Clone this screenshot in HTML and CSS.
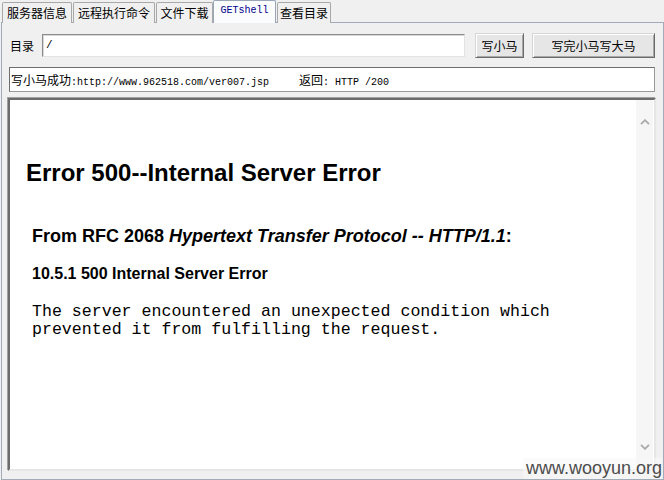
FILE: index.html
```html
<!DOCTYPE html>
<html>
<head>
<meta charset="utf-8">
<link rel="stylesheet" href="styles.css">
</head>
<body>
<div class="tabs">
  <div class="tab t1">服务器信息</div>
  <div class="tab t2">远程执行命令</div>
  <div class="tab t3">文件下载</div>
  <div class="tab active">GETshell</div>
  <div class="tab t5">查看目录</div>
</div>
<div class="panel">
  <div class="row">
    <span class="lbl">目录</span>
    <div class="input">/</div>
    <div class="btn small">写小马</div>
    <div class="btn big">写完小马写大马</div>
  </div>
  <div class="status"><span class="cjk">写小马成功</span>:http://www.962518.com/ver007.jsp     <span class="cjk">返回</span>: HTTP /200</div>
  <div class="view">
    <div class="doc">
      <h1 class="h-main">Error 500--Internal Server Error</h1>
      <h2 class="h-sub">From RFC 2068 <i>Hypertext Transfer Protocol -- HTTP/1.1</i>:</h2>
      <h3 class="h-sec">10.5.1 500 Internal Server Error</h3>
      <pre class="msg">The server encountered an unexpected condition which
prevented it from fulfilling the request.</pre>
    </div>
    <div class="scrollbar">
      <svg class="chev" width="10" height="6" viewBox="0 0 10 6"><polyline points="1,5.2 5,1.2 9,5.2" fill="none" stroke="#a9a9a9" stroke-width="1.8"/></svg>
      <svg class="chev" width="10" height="6" viewBox="0 0 10 6"><polyline points="1,0.8 5,4.8 9,0.8" fill="none" stroke="#a9a9a9" stroke-width="1.8"/></svg>
    </div>
  </div>
</div>
<div class="watermark">www.wooyun.org</div>
</body>
</html>
```
FILE: styles.css
```css
* { box-sizing: border-box; }
html, body {
  margin: 0;
  padding: 0;
  width: 664px;
  height: 480px;
  overflow: hidden;
  background: #f0f0f0;
}
body {
  position: relative;
  font-family: "Noto Sans CJK SC", "Liberation Sans", sans-serif;
  font-size: 12px;
  color: #000;
}
.tabs {
  display: flex;
  align-items: flex-end;
  height: 23px;
  padding-left: 2px;
}
.tab {
  height: 21px;
  border: 1px solid #a8a8a8;
  border-bottom: none;
  border-radius: 2px 2px 0 0;
  background: #f0f0f0;
  display: flex;
  align-items: center;
  justify-content: center;
  font-size: 12px;
  line-height: 12px;
  margin-right: 1px;
  padding-bottom: 1px;
}
.t1 { width: 70px; }
.t2 { width: 82px; }
.t3 { width: 57px; margin-right: 0; }
.t5 { width: 54px; }
.tab.active {
  width: 63px;
  height: 23px;
  background: #fbfcfe;
  border-color: #98a6b8;
  color: #00008c;
  font-family: "Liberation Mono", monospace;
  font-size: 10px;
  position: relative;
  z-index: 1;
  padding-bottom: 3px;
}
.panel {
  margin: -1px 0 0 1px;
  width: 663px;
  height: 458px;
  border: 1px solid #a2acb9;
  padding-top: 10px;
}
.row {
  display: flex;
  align-items: center;
  height: 25px;
}
.lbl {
  margin-left: 8px;
  width: 32px;
  font-size: 12px;
}
.input {
  width: 423px;
  height: 23px;
  background: #fff;
  border: 1px solid;
  border-color: #8c8c8c #e3e3e3 #e3e3e3 #8c8c8c;
  box-shadow: inset 1px 1px 0 #d8d8d8;
  font-family: "Liberation Mono", monospace;
  font-size: 11px;
  line-height: 21px;
  padding-left: 3px;
}
.btn {
  height: 25px;
  background: #e6e6e6;
  border: 1px solid;
  border-color: #d6d6d6 #6a6a6a #6a6a6a #d6d6d6;
  box-shadow: inset 1px 1px 0 #fff, inset -1px -1px 0 #a8a8a8;
  display: flex;
  align-items: center;
  justify-content: center;
  font-size: 12px;
}
.small { width: 49px; margin-left: 10px; }
.big { width: 123px; margin-left: 8px; }
.status {
  margin: 9px 0 0 7px;
  width: 646px;
  height: 25px;
  background: #fff;
  border: 1px solid #6e6e6e;
  border-right-color: #9a9a9a;
  border-bottom-color: #9a9a9a;
  font-family: "Liberation Mono", monospace;
  font-size: 10px;
  line-height: 23px;
  white-space: pre;
  padding-left: 1px;
}
.cjk {
  font-family: "Noto Sans CJK SC", sans-serif;
  font-size: 12px;
}
.view {
  margin: 6px 0 0 6px;
  width: 648px;
  height: 373px;
  background: #fff;
  border: 2px solid;
  border-color: #6c6c6c #e6e6e6 #e6e6e6 #6c6c6c;
  box-shadow: -1px -1px 0 #a0a0a0;
  display: flex;
}
.doc {
  flex: 1;
  padding-left: 16px;
}
.h-main {
  font-family: "Liberation Sans", Arial, sans-serif;
  font-weight: bold;
  font-size: 24px;
  line-height: normal;
  margin: 59px 0 0 0;
}
.h-sub {
  font-family: "Liberation Sans", Arial, sans-serif;
  font-weight: bold;
  font-size: 18px;
  line-height: normal;
  margin: 39px 0 0 6px;
}
.h-sec {
  font-family: "Liberation Sans", Arial, sans-serif;
  font-weight: bold;
  font-size: 16px;
  line-height: normal;
  margin: 18px 0 0 6px;
}
.msg {
  font-family: "Liberation Mono", "Courier New", monospace;
  font-size: 16.6px;
  line-height: 18px;
  margin: 20px 0 0 6px;
}
.scrollbar {
  width: 17px;
  margin-right: 1px;
  background: #f6f6f6;
  display: flex;
  flex-direction: column;
  justify-content: space-between;
  align-items: center;
  padding: 19px 0 19px 0;
}
.watermark {
  position: absolute;
  right: 2px;
  top: 458px;
  font-family: "Liberation Sans", Arial, sans-serif;
  font-size: 18px;
  color: #4c4c4c;
  background: rgba(248, 248, 248, 0.6);
  padding-left: 3px;
}
```
